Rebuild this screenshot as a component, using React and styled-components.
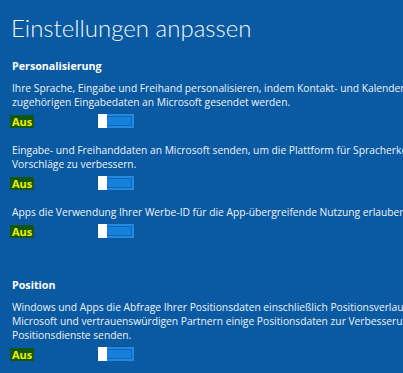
import React from 'react';
import styled, { createGlobalStyle } from 'styled-components';

const GlobalStyle = createGlobalStyle`
  html, body {
    margin: 0;
    padding: 0;
    background: #0a5aa3;
    overflow: hidden;
  }
`;

const sections = [
    {
        title: 'Personalisierung',
        items: [
            [
                'Ihre Sprache, Eingabe und Freihand personalisieren, indem Kontakt- und Kalenderdaten sowie andere',
                'zugehörigen Eingabedaten an Microsoft gesendet werden.',
            ],
            [
                'Eingabe- und Freihanddaten an Microsoft senden, um die Plattform für Spracherkennung und',
                'Vorschläge zu verbessern.',
            ],
            ['Apps die Verwendung Ihrer Werbe-ID für die App-übergreifende Nutzung erlauben.'],
        ],
    },
    {
        title: 'Position',
        items: [
            [
                'Windows und Apps die Abfrage Ihrer Positionsdaten einschließlich Positionsverlauf erlauben und',
                'Microsoft und vertrauenswürdigen Partnern einige Positionsdaten zur Verbesserung der',
                'Positionsdienste senden.',
            ],
        ],
    },
];

const Page = styled.div`
  width: 403px;
  height: 373px;
  box-sizing: border-box;
  padding: 13px 0 0 12px;
  background: #0a5aa3;
  color: #ffffff;
  font-family: 'Open Sans', 'Noto Sans', sans-serif;
  overflow: hidden;
`;

const Title = styled.h1`
  margin: 0 0 0 -1px;
  font-family: Lato, 'Open Sans', sans-serif;
  font-size: 24px;
  line-height: 30px;
  font-weight: 300;
  color: #f4f8fc;
  white-space: nowrap;
`;

const Section = styled.section`
  margin-top: ${props => (props.first ? '16px' : '40px')};
`;

const SectionTitle = styled.h2`
  margin: 0 0 8px;
  font-size: 10.7px;
  line-height: 14px;
  font-weight: 700;
  color: #ffffff;
`;

const Item = styled.div`
  & + & {
    margin-top: 15px;
  }
`;

const Text = styled.p`
  margin: 0;
  font-size: 10.25px;
  line-height: 14px;
  color: #eef3f9;
  white-space: nowrap;
`;

const ToggleRow = styled.div`
  display: grid;
  grid-template-columns: 86px 36px;
  align-items: center;
  margin-top: 5px;
  height: 14px;
`;

const Label = styled.span`
  justify-self: start;
  margin-left: -2px;
  padding: 0 2px;
  height: 13px;
  line-height: 13px;
  font-size: 11px;
  font-weight: 700;
  color: #f2f200;
  background: #11570f;
`;

const Toggle = styled.div`
  display: flex;
  width: 36px;
  height: 14px;
  box-sizing: border-box;
  background: #1680da;
  border: 2px solid #2189e2;
  box-shadow: inset 0 0 0 1px #0f66b8;
  position: relative;
`;

const Thumb = styled.div`
  position: absolute;
  left: -2px;
  top: -2px;
  width: 9px;
  height: 14px;
  background: #ffffff;
`;

export default function App() {
    return (
        <Page>
            <GlobalStyle />
            <Title>Einstellungen anpassen</Title>
            {sections.map((section, i) => (
                <Section key={section.title} first={i === 0}>
                    <SectionTitle>{section.title}</SectionTitle>
                    {section.items.map((lines, j) => (
                        <Item key={j}>
                            {lines.map(line => (
                                <Text key={line}>{line}</Text>
                            ))}
                            <ToggleRow>
                                <Label>Aus</Label>
                                <Toggle>
                                    <Thumb />
                                </Toggle>
                            </ToggleRow>
                        </Item>
                    ))}
                </Section>
            ))}
        </Page>
    );
}
